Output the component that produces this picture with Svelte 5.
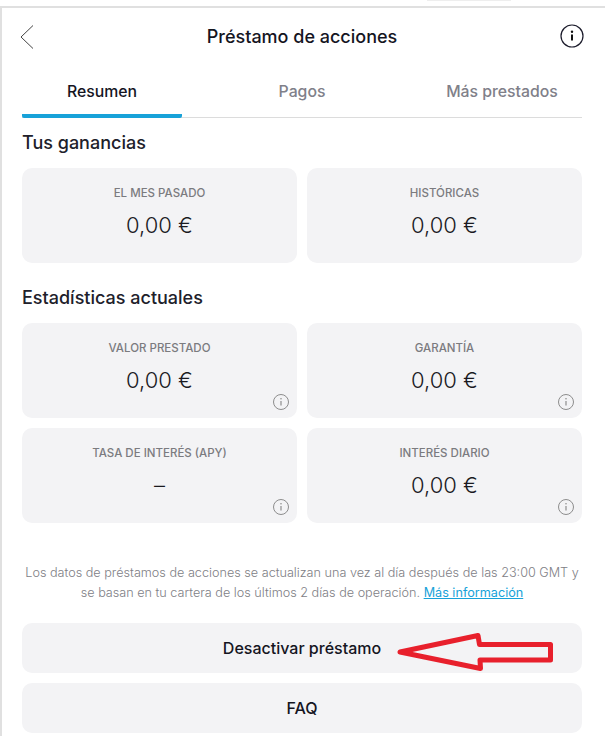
<script lang="ts">
  const earnings = [
    { label: 'EL MES PASADO', value: '0,00 €' },
    { label: 'HISTÓRICAS', value: '0,00 €' }
  ]
  const stats = [
    { label: 'VALOR PRESTADO', value: '0,00 €' },
    { label: 'GARANTÍA', value: '0,00 €' },
    { label: 'TASA DE INTERÉS (APY)', value: '–' },
    { label: 'INTERÉS DIARIO', value: '0,00 €' }
  ]
  const tabs = ['Resumen', 'Pagos', 'Más prestados']
  let activeTab = $state('Resumen')
</script>

{#snippet infoIcon()}
  <svg class="card-info" width="18" height="18" viewBox="0 0 18 18" fill="none">
    <circle cx="9" cy="9" r="7.5" stroke="#8d8d8d" stroke-width="1" />
    <circle cx="9" cy="5.8" r="0.8" fill="#8d8d8d" />
    <path d="M9 8v4.6" stroke="#8d8d8d" stroke-width="1.2" />
  </svg>
{/snippet}

<div class="page">
  <div class="top-mark"></div>
  <main class="panel">
    <header class="header">
      <svg class="back" width="16" height="26" viewBox="0 0 16 26" fill="none">
        <path d="M14 1.5 2 13l12 11.5" stroke="#444" stroke-width="1" />
      </svg>
      <h1>Préstamo de acciones</h1>
      <svg class="help" width="24" height="24" viewBox="0 0 24 24" fill="none">
        <circle cx="12" cy="12" r="11" stroke="#1b1b2b" stroke-width="1.2" />
        <circle cx="12" cy="7.8" r="1.2" fill="#111" />
        <path d="M12 10.5v6" stroke="#111" stroke-width="2" />
      </svg>
    </header>

    <nav class="tabs">
      {#each tabs as tab (tab)}
        <button type="button" class="tab" class:active={tab === activeTab} onclick={() => (activeTab = tab)}>
          {tab}
        </button>
      {/each}
    </nav>

    <h2 class="first">Tus ganancias</h2>
    <div class="grid">
      {#each earnings as card (card.label)}
        <div class="card">
          <div class="label">{card.label}</div>
          <div class="value">{card.value}</div>
        </div>
      {/each}
    </div>

    <h2 class="second">Estadísticas actuales</h2>
    <div class="grid">
      {#each stats as card (card.label)}
        <div class="card">
          <div class="label">{card.label}</div>
          <div class="value">{card.value}</div>
          {@render infoIcon()}
        </div>
      {/each}
    </div>

    <p class="note">
      Los datos de préstamos de acciones se actualizan una vez al día después de las 23:00 GMT y<br />
      se basan en tu cartera de los últimos 2 días de operación. <a href="#info">Más información</a>
    </p>

    <div class="actions">
      <button type="button" class="action">Desactivar préstamo</button>
      <button type="button" class="action">FAQ</button>
      <svg class="arrow" width="158" height="40" viewBox="0 0 158 40" fill="none">
        <path
          d="M3 20 81 3.5 82.5 12.5H153.5V28H83L83.5 36.5Z"
          stroke="#e8202c"
          stroke-width="5"
          stroke-linejoin="round"
        />
      </svg>
    </div>
  </main>
</div>

<style>
  :global(body) {
    margin: 0;
    background: #fff;
  }

  .page {
    width: 605px;
    height: 736px;
    overflow: hidden;
    position: relative;
    font-family: Inter, 'Noto Sans', sans-serif;
    box-sizing: border-box;
    padding-top: 6px;
  }

  .top-mark {
    position: absolute;
    top: 0;
    left: 427px;
    width: 84px;
    height: 1px;
    background: #eee;
  }

  .panel {
    border-top: 2px solid #e0e0e0;
    border-left: 2px solid #e0e0e0;
    padding: 0 23px 0 20px;
    height: 740px;
    box-sizing: border-box;
  }

  .header {
    height: 57px;
    display: flex;
    align-items: center;
    justify-content: center;
    position: relative;
  }

  .header h1 {
    margin: 0;
    font-size: 18px;
    font-weight: 450;
    color: #15151f;
  }

  .back {
    position: absolute;
    left: -3px;
    top: 16px;
  }

  .help {
    position: absolute;
    right: -2px;
    top: 16px;
  }

  .tabs {
    display: grid;
    grid-template-columns: 160px 1fr 160px;
    border-bottom: 1px solid #dcdcdc;
    height: 52px;
  }

  .tab {
    border: none;
    background: none;
    padding: 4px 0 0;
    font: 450 15.8px Inter, 'Noto Sans', sans-serif;
    color: #808089;
    height: 53px;
    border-bottom: 4px solid transparent;
    border-radius: 0 0 2px 2px;
  }

  .tab.active {
    color: #15151f;
    border-bottom-color: #18a2d9;
  }

  h2 {
    margin: 0;
    font-size: 18px;
    font-weight: 450;
    color: #20202a;
    line-height: 24px;
  }

  h2.first {
    margin-top: 13px;
    margin-bottom: 13px;
  }

  h2.second {
    margin-top: 23px;
    margin-bottom: 13px;
  }

  .grid {
    display: grid;
    grid-template-columns: 275px 275px;
    gap: 10px;
  }

  .card {
    height: 95px;
    border-radius: 10px;
    background: #f3f3f5;
    position: relative;
    text-align: center;
    box-sizing: border-box;
    padding-top: 17px;
  }

  .label {
    font-size: 11.5px;
    font-weight: 500;
    line-height: 16px;
    color: #7b7b7f;
  }

  .value {
    margin-top: 8px;
    font-size: 22px;
    font-weight: 300;
    line-height: 32px;
    color: #1a1a1f;
  }

  .card-info {
    position: absolute;
    right: 7px;
    bottom: 7px;
  }

  .note {
    margin: 40px -3px 0;
    font-size: 12.65px;
    font-weight: 300;
    line-height: 20px;
    color: #808085;
    text-align: center;
    white-space: nowrap;
  }

  .note a {
    color: #18a2d9;
    font-weight: 400;
  }

  .actions {
    margin-top: 20px;
    display: flex;
    flex-direction: column;
    gap: 10px;
    position: relative;
  }

  .action {
    height: 50px;
    border: none;
    border-radius: 10px;
    background: #f3f3f5;
    font: 450 16px Inter, 'Noto Sans', sans-serif;
    color: #15151f;
  }

  .arrow {
    position: absolute;
    left: 375px;
    top: 9px;
  }
</style>
